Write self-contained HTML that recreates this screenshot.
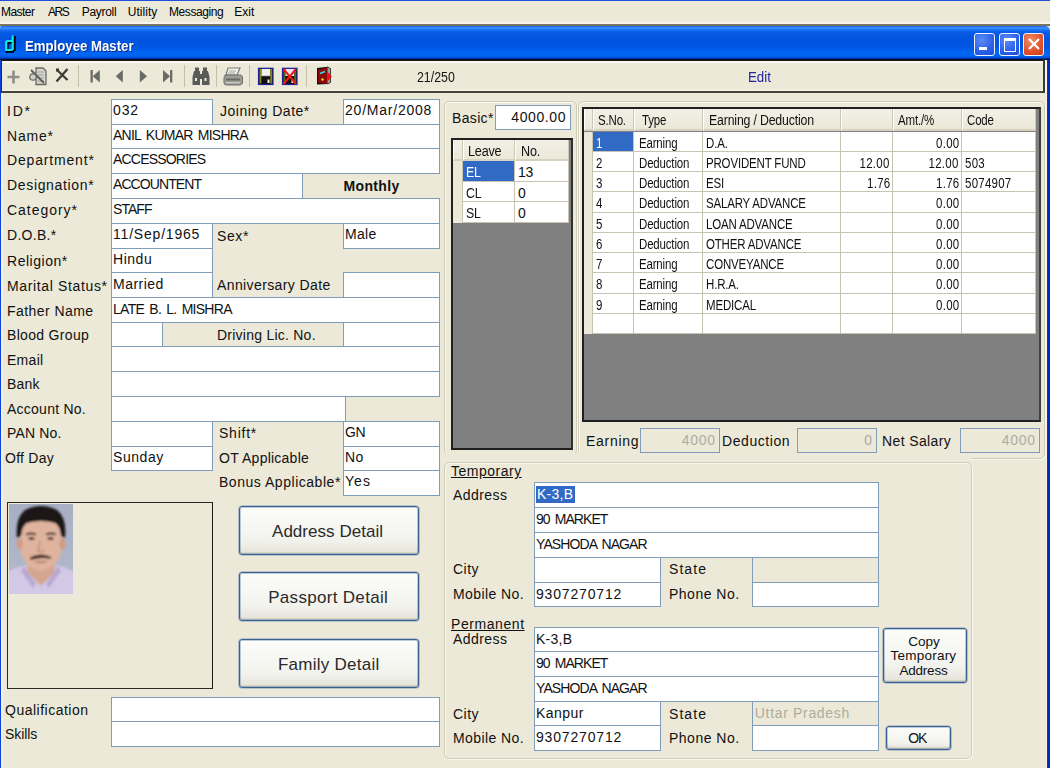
<!DOCTYPE html><html><head><meta charset="utf-8"><style>
html,body{margin:0;padding:0;}
body{width:1050px;height:768px;position:relative;overflow:hidden;background:#ECE9D8;font-family:"Liberation Sans", sans-serif;}
.t{position:absolute;white-space:nowrap;}
.b{position:absolute;box-sizing:content-box;}
</style></head><body>
<div class="b" style="left:0px;top:0px;width:1050px;height:1px;background:#1E4FD8;"></div>
<div class="b" style="left:0px;top:1px;width:1050px;height:21px;background:#ECE9D8;"></div>
<div class="b" style="left:0px;top:22px;width:1050px;height:2px;background:#F8F6EE;"></div>
<div class="b" style="left:0px;top:24px;width:1050px;height:2px;background:#7A7464;"></div>
<div class="t" style="left:1px;top:6.04px;font-size:12px;line-height:12px;letter-spacing:-0.56px;color:#000;">Master</div>
<div class="t" style="left:48px;top:6.04px;font-size:12px;line-height:12px;letter-spacing:-1.5px;color:#000;">ARS</div>
<div class="t" style="left:81.7px;top:6.04px;font-size:12px;line-height:12px;letter-spacing:-0.3px;color:#000;">Payroll</div>
<div class="t" style="left:127.7px;top:6.04px;font-size:12px;line-height:12px;letter-spacing:0.05px;color:#000;">Utility</div>
<div class="t" style="left:169px;top:6.04px;font-size:12px;line-height:12px;letter-spacing:-0.41px;color:#000;">Messaging</div>
<div class="t" style="left:234.3px;top:6.04px;font-size:12px;line-height:12px;letter-spacing:0.0px;color:#000;">Exit</div>
<div class="b" style="left:0;top:26px;width:1050px;height:34px;border-radius:2px 5px 0 0;background:linear-gradient(#1050D8 0px,#2A80F4 1px,#3A93FF 2px,#1870F4 4px,#0A5CE8 6px,#0054DE 13px,#0056E2 21px,#0066F6 27px,#0062F0 30px,#0048D8 32px,#001030 33.5px);"></div>
<div class="b" style="left:0px;top:60px;width:1px;height:708px;background:#0A44D8;"></div>
<div class="b" style="left:1px;top:60px;width:2px;height:708px;background:#F4F0E0;"></div>
<div class="b" style="left:1046px;top:60px;width:1px;height:708px;background:#FBF3DA;"></div>
<div class="b" style="left:1047px;top:60px;width:3px;height:708px;background:linear-gradient(90deg,#0038E8,#0020A0);"></div>
<svg class="b" style="left:4px;top:34px" width="13" height="19" viewBox="0 0 13 19"><path d="M9.5 1.5 V16.5 M2.5 7.5 H9.5 M2.5 7.5 V16.5 H9.5" stroke="#000" stroke-width="3.2" fill="none" transform="translate(0.6,0.6)"/><path d="M8.7 1.5 V16 M2.2 7 H8.7 M2.2 7 V16 H8.7" stroke="#10E8E8" stroke-width="2.2" fill="none"/></svg>
<div class="t" style="left:24.9px;top:37.68px;font-size:15.5px;line-height:15.5px;color:#fff;transform:scaleX(0.8516);transform-origin:0 0;font-weight:bold;text-shadow:1px 1px 0 #0A2A80;">Employee Master</div>
<div class="b" style="left:974px;top:33px;width:19px;height:21px;border:1.5px solid #F0F4FF;border-radius:3px;background:radial-gradient(circle at 35% 30%,#5C8CF8,#2A60E8 60%,#1A4CD8);"></div>
<div class="b" style="left:999px;top:33px;width:19px;height:21px;border:1.5px solid #F0F4FF;border-radius:3px;background:radial-gradient(circle at 35% 30%,#5C8CF8,#2A60E8 60%,#1A4CD8);"></div>
<div class="b" style="left:1023px;top:33px;width:19px;height:21px;border:1.5px solid #F0F4FF;border-radius:3px;background:radial-gradient(circle at 35% 30%,#F08C6A,#E0502A 60%,#C83C18);"></div>
<div class="b" style="left:979px;top:47px;width:8px;height:3px;background:#fff"></div>
<div class="b" style="left:1004px;top:38px;width:10px;height:10px;border:1.5px solid #fff;border-top-width:3px"></div>
<svg class="b" style="left:1027px;top:37px" width="14" height="14" viewBox="0 0 14 14"><path d="M2 2 L12 12 M12 2 L2 12" stroke="#fff" stroke-width="2.2"/></svg>
<div class="b" style="left:1px;top:60px;width:1045px;height:1px;background:#1A1810;"></div>
<div class="b" style="left:1px;top:61px;width:1045px;height:2px;background:#F8F6EE;"></div>
<div class="b" style="left:1px;top:63px;width:1045px;height:26px;background:#ECE9D8;"></div>
<div class="b" style="left:1px;top:89px;width:1045px;height:2px;background:#F4F0E0;"></div>
<div class="b" style="left:1px;top:91px;width:1045px;height:2px;background:#45443C;"></div>
<div class="b" style="left:1px;top:60px;width:1px;height:33px;background:#2A2A24;"></div>
<div class="b" style="left:1043px;top:60px;width:2px;height:33px;background:#3A3A34;"></div>
<div class="b" style="left:1045px;top:60px;width:1px;height:33px;background:#F8F6EE;"></div>
<div class="b" style="left:78px;top:65px;width:1px;height:22px;background:#C4C0AC;"></div>
<div class="b" style="left:184px;top:65px;width:1px;height:22px;background:#C4C0AC;"></div>
<div class="b" style="left:216px;top:65px;width:1px;height:22px;background:#C4C0AC;"></div>
<div class="b" style="left:249px;top:65px;width:1px;height:22px;background:#C4C0AC;"></div>
<div class="b" style="left:306px;top:65px;width:1px;height:22px;background:#C4C0AC;"></div>
<svg class="b" style="left:0;top:60px" width="340" height="33" viewBox="0 60 340 33">
<g fill="none" stroke="#8E8E86" stroke-width="2.6"><path d="M7.5 77 H19.5 M13.5 70.5 V83.5"/></g>
<g>
 <path d="M36 68 H43 L46 71 V84.5 H36 Z" fill="#D8D8D0" stroke="#6A6A64" stroke-width="1.3"/>
 <path d="M37.5 72 H44 M37.5 75 H44 M37.5 78 H44 M37.5 81 H44" stroke="#9A9A94" stroke-width="1"/>
 <path d="M31 70 L44 83" stroke="#5A5A56" stroke-width="1.8"/>
 <circle cx="33" cy="77" r="3.2" fill="#D0D0C8" stroke="#6A6A64" stroke-width="1.2"/>
</g>
<g stroke="#3C3C3A" stroke-width="2.3" fill="none"><path d="M56.5 69.5 L67.5 80 M67.5 69 L56.5 81.5"/></g>
<path d="M56 68.5 h3 v3 h-3z" fill="#3C3C3A"/>
<g fill="#6A6A66">
 <rect x="90.5" y="70" width="2.3" height="12.5"/><path d="M99.8 70 V82.5 L92.8 76.2 Z"/>
 <path d="M122.8 70 V82.5 L115.8 76.2 Z"/>
 <path d="M139.8 70 V82.5 L147 76.2 Z"/>
 <path d="M163 70 V82.5 L170 76.2 Z"/><rect x="170" y="70" width="2.3" height="12.5"/>
</g>
<g fill="#5A5A58">
 <rect x="195" y="67.5" width="4" height="4"/><rect x="203" y="67.5" width="4" height="4"/>
 <path d="M194 71 H200 V85 H192.5 V77 Z"/><path d="M202 71 H208 L209.5 77 V85 H202 Z"/>
 <rect x="199.5" y="74" width="3" height="5"/>
</g>
<g fill="#E8E8E0"><rect x="195" y="78" width="2" height="3"/><rect x="204.5" y="78" width="2" height="3"/></g>
<g>
 <path d="M228 68 H240 L237 75 H226 Z" fill="#F4F4F0" stroke="#7A7A76" stroke-width="1.2"/>
 <path d="M229 71 H236 M228 73 H235" stroke="#9A9A96" stroke-width="0.9"/>
 <path d="M225 75 H241 Q243 76 242.5 79 V83 Q242 85 239 85 H227 Q224 85 224 83 V79 Q224 76 225 75 Z" fill="#9C9C98" stroke="#6E6E6A" stroke-width="1"/>
 <rect x="226" y="78.5" width="14" height="2" fill="#6A6A66"/>
 <rect x="226" y="82" width="14" height="1.3" fill="#C8C8C4"/>
</g>
<g>
 <rect x="258.5" y="68.3" width="14.5" height="16.2" fill="#101010" stroke="#2020A0" stroke-width="1.2"/>
 <rect x="259.5" y="69" width="1.8" height="14.5" fill="#8A8A10"/><rect x="270.3" y="69" width="1.8" height="14.5" fill="#8A8A10"/>
 <rect x="261.5" y="69" width="8.6" height="7" fill="#F0F0EC"/>
 <rect x="261.5" y="75" width="8.6" height="1.2" fill="#C8C8F0"/>
 <rect x="267.5" y="79.5" width="2" height="3.5" fill="#F0F0F0"/>
</g>
<g>
 <rect x="282.5" y="68.3" width="14.5" height="16.2" fill="#101010" stroke="#2020A0" stroke-width="1.2"/>
 <rect x="283.5" y="69" width="1.8" height="14.5" fill="#5A6A10"/><rect x="294.3" y="69" width="1.8" height="14.5" fill="#5A6A10"/>
 <rect x="285.5" y="69" width="8.6" height="7" fill="#E8E8F4"/>
 <rect x="291.5" y="79.5" width="2" height="3.5" fill="#F0F0F0"/>
 <path d="M283.5 69 L296 84 M296 69 L283.5 84" stroke="#F01818" stroke-width="2"/>
</g>
<g>
 <path d="M317 68 L328 66.8 V84 L317 84.5 Z" fill="#101010"/>
 <path d="M318 69.5 L327.5 67.5 V84 L318 82.8 Z" fill="#8A0A0A"/>
 <path d="M320 73.5 L325 71.5" stroke="#30E0E8" stroke-width="1.8"/>
 <circle cx="322.5" cy="79.5" r="1.2" fill="#F0E020"/>
 <path d="M327.5 67 L330.5 68.5 V82.5 L327.5 84" fill="#A0A0A0" stroke="#202020" stroke-width="0.8"/>
 <path d="M331.8 76.5 L328.5 72.5 L326.8 76.5 L328.5 80.8 Z" fill="#F01010"/>
</g>
</svg>
<div class="t" style="left:417px;top:70.33px;font-size:14.5px;line-height:14.5px;color:#151515;transform:scaleX(0.8512);transform-origin:0 0;">21/250</div>
<div class="t" style="left:748px;top:70.33px;font-size:14.5px;line-height:14.5px;color:#2424A0;transform:scaleX(0.9167);transform-origin:0 0;">Edit</div>
<div class="t" style="left:7px;top:104.45px;font-size:14px;line-height:14px;letter-spacing:1.8px;color:#111;">ID*</div>
<div class="t" style="left:7px;top:129.45px;font-size:14px;line-height:14px;letter-spacing:0.8px;color:#111;">Name*</div>
<div class="t" style="left:7px;top:153.45px;font-size:14px;line-height:14px;letter-spacing:0.83px;color:#111;">Department*</div>
<div class="t" style="left:7px;top:178.45px;font-size:14px;line-height:14px;letter-spacing:0.66px;color:#111;">Designation*</div>
<div class="t" style="left:7px;top:203.45px;font-size:14px;line-height:14px;letter-spacing:0.96px;color:#111;">Category*</div>
<div class="t" style="left:7px;top:228.45px;font-size:14px;line-height:14px;letter-spacing:0.3px;color:#111;">D.O.B.*</div>
<div class="t" style="left:7px;top:253.95px;font-size:14px;line-height:14px;letter-spacing:0.53px;color:#111;">Religion*</div>
<div class="t" style="left:7px;top:278.95px;font-size:14px;line-height:14px;letter-spacing:0.64px;color:#111;">Marital Status*</div>
<div class="t" style="left:7px;top:303.95px;font-size:14px;line-height:14px;letter-spacing:0.44px;color:#111;">Father Name</div>
<div class="t" style="left:7px;top:328.45px;font-size:14px;line-height:14px;letter-spacing:0.32px;color:#111;">Blood Group</div>
<div class="t" style="left:7px;top:352.75px;font-size:14px;line-height:14px;letter-spacing:0.28px;color:#111;">Email</div>
<div class="t" style="left:7px;top:377.45px;font-size:14px;line-height:14px;letter-spacing:0.2px;color:#111;">Bank</div>
<div class="t" style="left:7px;top:402.45px;font-size:14px;line-height:14px;letter-spacing:0.25px;color:#111;">Account No.</div>
<div class="t" style="left:7px;top:426.45px;font-size:14px;line-height:14px;letter-spacing:0.17px;color:#111;">PAN No.</div>
<div class="t" style="left:5px;top:451.45px;font-size:14px;line-height:14px;letter-spacing:0.25px;color:#111;">Off Day</div>
<div class="b" style="left:111px;top:99px;width:100px;height:24px;background:#fff;border:1px solid #7F9DB9;"></div>
<div class="t" style="left:113px;top:103.05px;font-size:14px;line-height:14px;letter-spacing:0.9px;color:#111;">032</div>
<div class="b" style="left:343px;top:99px;width:95px;height:24px;background:#fff;border:1px solid #7F9DB9;"></div>
<div class="t" style="left:345px;top:103.05px;font-size:14px;line-height:14px;letter-spacing:0.78px;color:#111;">20/Mar/2008</div>
<div class="b" style="left:111px;top:124px;width:327px;height:23px;background:#fff;border:1px solid #7F9DB9;"></div>
<div class="t" style="left:113px;top:128.05px;font-size:14px;line-height:14px;letter-spacing:-0.74px;color:#111;word-spacing:2.0px;">ANIL KUMAR MISHRA</div>
<div class="b" style="left:111px;top:148px;width:327px;height:24px;background:#fff;border:1px solid #7F9DB9;"></div>
<div class="t" style="left:113px;top:152.05px;font-size:14px;line-height:14px;letter-spacing:-0.8px;color:#111;">ACCESSORIES</div>
<div class="b" style="left:111px;top:173px;width:190px;height:24px;background:#fff;border:1px solid #7F9DB9;"></div>
<div class="t" style="left:113px;top:177.05px;font-size:14px;line-height:14px;letter-spacing:-0.92px;color:#111;">ACCOUNTENT</div>
<div class="b" style="left:111px;top:198px;width:327px;height:24px;background:#fff;border:1px solid #7F9DB9;"></div>
<div class="t" style="left:113px;top:202.05px;font-size:14px;line-height:14px;letter-spacing:-0.95px;color:#111;">STAFF</div>
<div class="b" style="left:111px;top:223px;width:100px;height:24px;background:#fff;border:1px solid #7F9DB9;"></div>
<div class="t" style="left:113px;top:227.05px;font-size:14px;line-height:14px;letter-spacing:0.8px;color:#111;">11/Sep/1965</div>
<div class="b" style="left:343px;top:223px;width:95px;height:24px;background:#fff;border:1px solid #7F9DB9;"></div>
<div class="t" style="left:345px;top:227.05px;font-size:14px;line-height:14px;letter-spacing:0.33px;color:#111;">Male</div>
<div class="b" style="left:111px;top:248px;width:100px;height:23px;background:#fff;border:1px solid #7F9DB9;"></div>
<div class="t" style="left:113px;top:252.05px;font-size:14px;line-height:14px;letter-spacing:0.53px;color:#111;">Hindu</div>
<div class="b" style="left:111px;top:272px;width:100px;height:24px;background:#fff;border:1px solid #7F9DB9;"></div>
<div class="t" style="left:113px;top:277.05px;font-size:14px;line-height:14px;letter-spacing:0.47px;color:#111;">Married</div>
<div class="b" style="left:343px;top:272px;width:95px;height:24px;background:#fff;border:1px solid #7F9DB9;"></div>
<div class="b" style="left:111px;top:297px;width:327px;height:24px;background:#fff;border:1px solid #7F9DB9;"></div>
<div class="t" style="left:113px;top:302.15px;font-size:14px;line-height:14px;letter-spacing:-0.72px;color:#111;word-spacing:2.0px;">LATE B. L. MISHRA</div>
<div class="b" style="left:111px;top:322px;width:50px;height:23px;background:#fff;border:1px solid #7F9DB9;"></div>
<div class="b" style="left:343px;top:322px;width:95px;height:23px;background:#fff;border:1px solid #7F9DB9;"></div>
<div class="b" style="left:111px;top:346px;width:327px;height:24px;background:#fff;border:1px solid #7F9DB9;"></div>
<div class="b" style="left:111px;top:371px;width:327px;height:24px;background:#fff;border:1px solid #7F9DB9;"></div>
<div class="b" style="left:111px;top:396px;width:233px;height:24px;background:#fff;border:1px solid #7F9DB9;"></div>
<div class="b" style="left:111px;top:421px;width:100px;height:24px;background:#fff;border:1px solid #7F9DB9;"></div>
<div class="b" style="left:343px;top:421px;width:95px;height:24px;background:#fff;border:1px solid #7F9DB9;"></div>
<div class="t" style="left:345px;top:425.05px;font-size:14px;line-height:14px;letter-spacing:-0.4px;color:#111;">GN</div>
<div class="b" style="left:111px;top:446px;width:100px;height:23px;background:#fff;border:1px solid #7F9DB9;"></div>
<div class="t" style="left:113px;top:450.05px;font-size:14px;line-height:14px;letter-spacing:0.56px;color:#111;">Sunday</div>
<div class="b" style="left:343px;top:446px;width:95px;height:23px;background:#fff;border:1px solid #7F9DB9;"></div>
<div class="t" style="left:345px;top:450.05px;font-size:14px;line-height:14px;letter-spacing:0.4px;color:#111;">No</div>
<div class="b" style="left:343px;top:470px;width:95px;height:24px;background:#fff;border:1px solid #7F9DB9;"></div>
<div class="t" style="left:345px;top:474.05px;font-size:14px;line-height:14px;letter-spacing:1.05px;color:#111;">Yes</div>
<div class="t" style="left:220px;top:104.45px;font-size:14px;line-height:14px;letter-spacing:0.5px;color:#111;">Joining Date*</div>
<div class="t" style="left:343.6px;top:178.85px;font-size:14px;line-height:14px;letter-spacing:0.33px;color:#111;font-weight:bold;">Monthly</div>
<div class="t" style="left:217px;top:228.95px;font-size:14px;line-height:14px;letter-spacing:0.6px;color:#111;">Sex*</div>
<div class="t" style="left:217px;top:277.65px;font-size:14px;line-height:14px;letter-spacing:0.39px;color:#111;">Anniversary Date</div>
<div class="t" style="left:217px;top:327.65px;font-size:14px;line-height:14px;letter-spacing:0.24px;color:#111;">Driving Lic. No.</div>
<div class="t" style="left:219px;top:426.45px;font-size:14px;line-height:14px;letter-spacing:0.76px;color:#111;">Shift*</div>
<div class="t" style="left:219px;top:451.45px;font-size:14px;line-height:14px;letter-spacing:0.24px;color:#111;">OT Applicable</div>
<div class="t" style="left:219px;top:475.45px;font-size:14px;line-height:14px;letter-spacing:0.53px;color:#111;">Bonus Applicable*</div>
<div class="b" style="left:7px;top:502px;width:204px;height:185px;border:1.5px solid #2A2A24;border-right-color:#1A1A18;"></div>
<svg class="b" style="left:9px;top:504px" width="64" height="90" viewBox="0 0 64 90">
<defs><filter id="bl" x="-10%" y="-10%" width="120%" height="120%"><feGaussianBlur stdDeviation="0.9"/></filter>
<linearGradient id="bgg" x1="0" y1="0" x2="0" y2="1"><stop offset="0" stop-color="#A8AFC4"/><stop offset="1" stop-color="#B4BACB"/></linearGradient></defs>
<rect width="64" height="90" fill="url(#bgg)"/>
<g filter="url(#bl)">
<path d="M-2 68 Q8 63 17 61 L32 76 L47 61 Q56 63 66 68 V92 H-2 Z" fill="#D3C8E6"/>
<path d="M19 56 L45 56 L46 68 L32 82 L18 68 Z" fill="#D4A690"/>
<path d="M15 62 L27 80 L24 84 L12 67 Z" fill="#B9A8D2"/>
<path d="M49 62 L37 80 L40 84 L52 67 Z" fill="#B9A8D2"/>
<ellipse cx="32" cy="41.5" rx="21" ry="25" fill="#DFB39E"/>
<path d="M11.5 40 Q11 20 20 17 H44 Q53 20 52.5 40 Z" fill="#DFB39E"/>
<ellipse cx="10.5" cy="40" rx="3" ry="6" fill="#CF9C86"/>
<ellipse cx="53.5" cy="40" rx="3" ry="6" fill="#CF9C86"/>
<path d="M8 34 Q6 14 16 6 Q32 -2 48 6 Q58 14 56 34 L52 32 Q51 22 46 19 Q32 15 18 19 Q13 22 12 32 Z" fill="#1C1818"/>
<path d="M17 30.5 Q22 28.5 27 30.5 M37 30.5 Q42 28.5 47 30.5" stroke="#3A2622" stroke-width="1.8" fill="none"/>
<ellipse cx="22.5" cy="34.5" rx="3" ry="1.5" fill="#4A2E26"/>
<ellipse cx="41.5" cy="34.5" rx="3" ry="1.5" fill="#4A2E26"/>
<path d="M31 37 Q30 44 28.5 46.5 Q32 48.5 35.5 46.5" stroke="#B4806A" stroke-width="1.1" fill="none"/>
<path d="M22 54 Q32 48.5 42 54 Q32 52 22 55 Z" fill="#3A2220" stroke="#3A2220" stroke-width="1.6"/>
<path d="M26.5 57.5 Q32 59 37.5 57.5" stroke="#B07060" stroke-width="1.3" fill="none"/>
</g>
</svg>
<div class="b" style="left:239px;top:506px;width:178px;height:47px;border:1px solid #3A6290;border-radius:3px;background:linear-gradient(#FCFCFA,#F3F3EE 70%,#E4E2D8);box-shadow:inset 0 0 0 1px rgba(70,110,160,0.35), inset 0 -2px 0 #D8D4C4, 0 0 0 0.6px #8AA0C0;"></div>
<div class="t" style="left:272px;top:522.91px;font-size:17px;line-height:17px;letter-spacing:0.04px;color:#2A2A2A;">Address Detail</div>
<div class="b" style="left:239px;top:572px;width:178px;height:47px;border:1px solid #3A6290;border-radius:3px;background:linear-gradient(#FCFCFA,#F3F3EE 70%,#E4E2D8);box-shadow:inset 0 0 0 1px rgba(70,110,160,0.35), inset 0 -2px 0 #D8D4C4, 0 0 0 0.6px #8AA0C0;"></div>
<div class="t" style="left:268.2px;top:588.91px;font-size:17px;line-height:17px;letter-spacing:0.31px;color:#2A2A2A;">Passport Detail</div>
<div class="b" style="left:239px;top:639px;width:178px;height:47px;border:1px solid #3A6290;border-radius:3px;background:linear-gradient(#FCFCFA,#F3F3EE 70%,#E4E2D8);box-shadow:inset 0 0 0 1px rgba(70,110,160,0.35), inset 0 -2px 0 #D8D4C4, 0 0 0 0.6px #8AA0C0;"></div>
<div class="t" style="left:277.9px;top:655.91px;font-size:17px;line-height:17px;letter-spacing:0.27px;color:#2A2A2A;">Family Detail</div>
<div class="t" style="left:5px;top:703.15px;font-size:14px;line-height:14px;letter-spacing:0.5px;color:#111;">Qualification</div>
<div class="t" style="left:5px;top:727.15px;font-size:14px;line-height:14px;letter-spacing:-0.08px;color:#111;">Skills</div>
<div class="b" style="left:111px;top:697px;width:327px;height:24px;background:#fff;border:1px solid #7F9DB9;"></div>
<div class="b" style="left:111px;top:721px;width:327px;height:24px;background:#fff;border:1px solid #7F9DB9;"></div>
<div class="b" style="left:444px;top:101px;width:131px;height:352px;border:1px solid #D0CCB8;border-radius:5px;box-shadow:inset 1px 1px 0 #FAF8F0, 1px 1px 0 #FAF8F0;"></div>
<div class="t" style="left:452px;top:111.15px;font-size:14px;line-height:14px;letter-spacing:0.34px;color:#111;">Basic*</div>
<div class="b" style="left:495px;top:105px;width:74px;height:23px;background:#fff;border:1px solid #7F9DB9;"></div>
<div class="t" style="right:483.9px;top:110.05px;font-size:14px;line-height:14px;letter-spacing:0.6px;color:#111;">4000.00</div>
<div class="b" style="left:451px;top:138px;width:118px;height:308px;background:#808080;border:2px solid #202020;border-right-color:#303030;"></div>
<div class="b" style="left:453px;top:140px;width:8px;height:19px;background:linear-gradient(#F2F0E6,#EBE8D8);border-left:1px solid #FFFFFF;border-right:1px solid #CBC7B8;border-bottom:2px solid #D6D2C2;"></div>
<div class="b" style="left:463px;top:140px;width:50px;height:19px;background:linear-gradient(#F2F0E6,#EBE8D8);border-left:1px solid #FFFFFF;border-right:1px solid #CBC7B8;border-bottom:2px solid #D6D2C2;"></div>
<div class="t" style="left:468px;top:144.15px;font-size:14px;line-height:14px;letter-spacing:-0.2px;color:#111;transform:scaleX(0.9);transform-origin:0 0;">Leave</div>
<div class="b" style="left:515px;top:140px;width:52px;height:19px;background:linear-gradient(#F2F0E6,#EBE8D8);border-left:1px solid #FFFFFF;border-right:1px solid #CBC7B8;border-bottom:2px solid #D6D2C2;"></div>
<div class="t" style="left:521px;top:144.15px;font-size:14px;line-height:14px;letter-spacing:-0.2px;color:#111;transform:scaleX(0.9);transform-origin:0 0;">No.</div>
<div class="b" style="left:453px;top:161px;width:9px;height:21px;background:#ECE9D8;border-right:1px solid #C8C4B4;"></div>
<div class="b" style="left:463px;top:161px;width:51px;height:20px;background:#316AC5;border-right:1px solid #C8C4B4;border-bottom:1px solid #C8C4B4;"></div>
<div class="t" style="left:466px;top:165.15px;font-size:14px;line-height:14px;letter-spacing:-0.3px;color:#fff;transform:scaleX(0.88);transform-origin:0 0;">EL</div>
<div class="b" style="left:515px;top:161px;width:53px;height:20px;background:#fff;border-right:1px solid #C8C4B4;border-bottom:1px solid #C8C4B4;"></div>
<div class="t" style="left:518px;top:165.15px;font-size:14px;line-height:14px;letter-spacing:-0.3px;color:#111;transform:scaleX(1.0);transform-origin:0 0;">13</div>
<div class="b" style="left:453px;top:182px;width:9px;height:20px;background:#ECE9D8;border-right:1px solid #C8C4B4;"></div>
<div class="b" style="left:463px;top:182px;width:51px;height:19px;background:#fff;border-right:1px solid #C8C4B4;border-bottom:1px solid #C8C4B4;"></div>
<div class="t" style="left:466px;top:186.15px;font-size:14px;line-height:14px;letter-spacing:-0.3px;color:#111;transform:scaleX(0.88);transform-origin:0 0;">CL</div>
<div class="b" style="left:515px;top:182px;width:53px;height:19px;background:#fff;border-right:1px solid #C8C4B4;border-bottom:1px solid #C8C4B4;"></div>
<div class="t" style="left:518px;top:186.15px;font-size:14px;line-height:14px;letter-spacing:-0.3px;color:#111;transform:scaleX(1.0);transform-origin:0 0;">0</div>
<div class="b" style="left:453px;top:202px;width:9px;height:21px;background:#ECE9D8;border-right:1px solid #C8C4B4;"></div>
<div class="b" style="left:463px;top:202px;width:51px;height:20px;background:#fff;border-right:1px solid #C8C4B4;border-bottom:1px solid #C8C4B4;"></div>
<div class="t" style="left:466px;top:206.15px;font-size:14px;line-height:14px;letter-spacing:-0.3px;color:#111;transform:scaleX(0.88);transform-origin:0 0;">SL</div>
<div class="b" style="left:515px;top:202px;width:53px;height:20px;background:#fff;border-right:1px solid #C8C4B4;border-bottom:1px solid #C8C4B4;"></div>
<div class="t" style="left:518px;top:206.15px;font-size:14px;line-height:14px;letter-spacing:-0.3px;color:#111;transform:scaleX(1.0);transform-origin:0 0;">0</div>
<div class="b" style="left:578px;top:101px;width:465px;height:356px;border:1px solid #D0CCB8;border-radius:5px;box-shadow:inset 1px 1px 0 #FAF8F0, 1px 1px 0 #FAF8F0;"></div>
<div class="b" style="left:582px;top:107px;width:455px;height:311px;background:#808080;border:2px solid #202020;border-right-color:#404040;"></div>
<div class="b" style="left:584px;top:109px;width:7px;height:20px;background:linear-gradient(#F2F0E6,#EBE8D8);border-left:1px solid #FFFFFF;border-right:1px solid #CBC7B8;border-bottom:2px solid #D6D2C2;"></div>
<div class="b" style="left:593px;top:109px;width:39px;height:20px;background:linear-gradient(#F2F0E6,#EBE8D8);border-left:1px solid #FFFFFF;border-right:1px solid #CBC7B8;border-bottom:2px solid #D6D2C2;"></div>
<div class="t" style="left:598px;top:113.15px;font-size:14px;line-height:14px;letter-spacing:-0.2px;color:#111;transform:scaleX(0.82);transform-origin:0 0;">S.No.</div>
<div class="b" style="left:634px;top:109px;width:67px;height:20px;background:linear-gradient(#F2F0E6,#EBE8D8);border-left:1px solid #FFFFFF;border-right:1px solid #CBC7B8;border-bottom:2px solid #D6D2C2;"></div>
<div class="t" style="left:642px;top:113.15px;font-size:14px;line-height:14px;letter-spacing:-0.2px;color:#111;transform:scaleX(0.82);transform-origin:0 0;">Type</div>
<div class="b" style="left:703px;top:109px;width:136px;height:20px;background:linear-gradient(#F2F0E6,#EBE8D8);border-left:1px solid #FFFFFF;border-right:1px solid #CBC7B8;border-bottom:2px solid #D6D2C2;"></div>
<div class="t" style="left:709px;top:113.15px;font-size:14px;line-height:14px;letter-spacing:-0.2px;color:#111;transform:scaleX(0.88);transform-origin:0 0;">Earning / Deduction</div>
<div class="b" style="left:841px;top:109px;width:50px;height:20px;background:linear-gradient(#F2F0E6,#EBE8D8);border-left:1px solid #FFFFFF;border-right:1px solid #CBC7B8;border-bottom:2px solid #D6D2C2;"></div>
<div class="b" style="left:893px;top:109px;width:67px;height:20px;background:linear-gradient(#F2F0E6,#EBE8D8);border-left:1px solid #FFFFFF;border-right:1px solid #CBC7B8;border-bottom:2px solid #D6D2C2;"></div>
<div class="t" style="left:898px;top:113.15px;font-size:14px;line-height:14px;letter-spacing:-0.2px;color:#111;transform:scaleX(0.82);transform-origin:0 0;">Amt./%</div>
<div class="b" style="left:962px;top:109px;width:72px;height:20px;background:linear-gradient(#F2F0E6,#EBE8D8);border-left:1px solid #FFFFFF;border-right:1px solid #CBC7B8;border-bottom:2px solid #D6D2C2;"></div>
<div class="t" style="left:967px;top:113.15px;font-size:14px;line-height:14px;letter-spacing:-0.2px;color:#111;transform:scaleX(0.82);transform-origin:0 0;">Code</div>
<div class="b" style="left:584px;top:132px;width:8px;height:20px;background:#ECE9D8;border-right:1px solid #C8C4B4;"></div>
<div class="b" style="left:593px;top:132px;width:40px;height:19px;background:#316AC5;border-right:1px solid #C8C4B4;border-bottom:1px solid #C8C4B4;"></div>
<div class="t" style="left:596px;top:135.65px;font-size:14px;line-height:14px;letter-spacing:-0.2px;color:#fff;transform:scaleX(0.82);transform-origin:0 0;">1</div>
<div class="b" style="left:634px;top:132px;width:68px;height:19px;background:#fff;border-right:1px solid #C8C4B4;border-bottom:1px solid #C8C4B4;"></div>
<div class="t" style="left:638.5px;top:135.65px;font-size:14px;line-height:14px;letter-spacing:-0.2px;color:#111;transform:scaleX(0.82);transform-origin:0 0;">Earning</div>
<div class="b" style="left:703px;top:132px;width:137px;height:19px;background:#fff;border-right:1px solid #C8C4B4;border-bottom:1px solid #C8C4B4;"></div>
<div class="t" style="left:706px;top:135.65px;font-size:14px;line-height:14px;letter-spacing:-0.2px;color:#111;transform:scaleX(0.82);transform-origin:0 0;">D.A.</div>
<div class="b" style="left:841px;top:132px;width:51px;height:19px;background:#fff;border-right:1px solid #C8C4B4;border-bottom:1px solid #C8C4B4;"></div>
<div class="b" style="left:893px;top:132px;width:68px;height:19px;background:#fff;border-right:1px solid #C8C4B4;border-bottom:1px solid #C8C4B4;"></div>
<div class="t" style="right:91px;top:135.65px;font-size:14px;line-height:14px;letter-spacing:0.3px;color:#111;transform:scaleX(0.82);transform-origin:100% 0;">0.00</div>
<div class="b" style="left:962px;top:132px;width:73px;height:19px;background:#fff;border-right:1px solid #C8C4B4;border-bottom:1px solid #C8C4B4;"></div>
<div class="b" style="left:584px;top:152px;width:8px;height:20px;background:#ECE9D8;border-right:1px solid #C8C4B4;"></div>
<div class="b" style="left:593px;top:152px;width:40px;height:19px;background:#fff;border-right:1px solid #C8C4B4;border-bottom:1px solid #C8C4B4;"></div>
<div class="t" style="left:596px;top:155.65px;font-size:14px;line-height:14px;letter-spacing:-0.2px;color:#111;transform:scaleX(0.82);transform-origin:0 0;">2</div>
<div class="b" style="left:634px;top:152px;width:68px;height:19px;background:#fff;border-right:1px solid #C8C4B4;border-bottom:1px solid #C8C4B4;"></div>
<div class="t" style="left:638.5px;top:155.65px;font-size:14px;line-height:14px;letter-spacing:-0.2px;color:#111;transform:scaleX(0.82);transform-origin:0 0;">Deduction</div>
<div class="b" style="left:703px;top:152px;width:137px;height:19px;background:#fff;border-right:1px solid #C8C4B4;border-bottom:1px solid #C8C4B4;"></div>
<div class="t" style="left:706px;top:155.65px;font-size:14px;line-height:14px;letter-spacing:-0.2px;color:#111;transform:scaleX(0.82);transform-origin:0 0;">PROVIDENT FUND</div>
<div class="b" style="left:841px;top:152px;width:51px;height:19px;background:#fff;border-right:1px solid #C8C4B4;border-bottom:1px solid #C8C4B4;"></div>
<div class="t" style="right:160px;top:155.65px;font-size:14px;line-height:14px;letter-spacing:0.3px;color:#111;transform:scaleX(0.82);transform-origin:100% 0;">12.00</div>
<div class="b" style="left:893px;top:152px;width:68px;height:19px;background:#fff;border-right:1px solid #C8C4B4;border-bottom:1px solid #C8C4B4;"></div>
<div class="t" style="right:91px;top:155.65px;font-size:14px;line-height:14px;letter-spacing:0.3px;color:#111;transform:scaleX(0.82);transform-origin:100% 0;">12.00</div>
<div class="b" style="left:962px;top:152px;width:73px;height:19px;background:#fff;border-right:1px solid #C8C4B4;border-bottom:1px solid #C8C4B4;"></div>
<div class="t" style="left:965px;top:155.65px;font-size:14px;line-height:14px;letter-spacing:0.3px;color:#111;transform:scaleX(0.82);transform-origin:0 0;">503</div>
<div class="b" style="left:584px;top:172px;width:8px;height:20px;background:#ECE9D8;border-right:1px solid #C8C4B4;"></div>
<div class="b" style="left:593px;top:172px;width:40px;height:19px;background:#fff;border-right:1px solid #C8C4B4;border-bottom:1px solid #C8C4B4;"></div>
<div class="t" style="left:596px;top:175.65px;font-size:14px;line-height:14px;letter-spacing:-0.2px;color:#111;transform:scaleX(0.82);transform-origin:0 0;">3</div>
<div class="b" style="left:634px;top:172px;width:68px;height:19px;background:#fff;border-right:1px solid #C8C4B4;border-bottom:1px solid #C8C4B4;"></div>
<div class="t" style="left:638.5px;top:175.65px;font-size:14px;line-height:14px;letter-spacing:-0.2px;color:#111;transform:scaleX(0.82);transform-origin:0 0;">Deduction</div>
<div class="b" style="left:703px;top:172px;width:137px;height:19px;background:#fff;border-right:1px solid #C8C4B4;border-bottom:1px solid #C8C4B4;"></div>
<div class="t" style="left:706px;top:175.65px;font-size:14px;line-height:14px;letter-spacing:-0.2px;color:#111;transform:scaleX(0.82);transform-origin:0 0;">ESI</div>
<div class="b" style="left:841px;top:172px;width:51px;height:19px;background:#fff;border-right:1px solid #C8C4B4;border-bottom:1px solid #C8C4B4;"></div>
<div class="t" style="right:160px;top:175.65px;font-size:14px;line-height:14px;letter-spacing:0.3px;color:#111;transform:scaleX(0.82);transform-origin:100% 0;">1.76</div>
<div class="b" style="left:893px;top:172px;width:68px;height:19px;background:#fff;border-right:1px solid #C8C4B4;border-bottom:1px solid #C8C4B4;"></div>
<div class="t" style="right:91px;top:175.65px;font-size:14px;line-height:14px;letter-spacing:0.3px;color:#111;transform:scaleX(0.82);transform-origin:100% 0;">1.76</div>
<div class="b" style="left:962px;top:172px;width:73px;height:19px;background:#fff;border-right:1px solid #C8C4B4;border-bottom:1px solid #C8C4B4;"></div>
<div class="t" style="left:965px;top:175.65px;font-size:14px;line-height:14px;letter-spacing:0.3px;color:#111;transform:scaleX(0.82);transform-origin:0 0;">5074907</div>
<div class="b" style="left:584px;top:192px;width:8px;height:21px;background:#ECE9D8;border-right:1px solid #C8C4B4;"></div>
<div class="b" style="left:593px;top:192px;width:40px;height:20px;background:#fff;border-right:1px solid #C8C4B4;border-bottom:1px solid #C8C4B4;"></div>
<div class="t" style="left:596px;top:195.65px;font-size:14px;line-height:14px;letter-spacing:-0.2px;color:#111;transform:scaleX(0.82);transform-origin:0 0;">4</div>
<div class="b" style="left:634px;top:192px;width:68px;height:20px;background:#fff;border-right:1px solid #C8C4B4;border-bottom:1px solid #C8C4B4;"></div>
<div class="t" style="left:638.5px;top:195.65px;font-size:14px;line-height:14px;letter-spacing:-0.2px;color:#111;transform:scaleX(0.82);transform-origin:0 0;">Deduction</div>
<div class="b" style="left:703px;top:192px;width:137px;height:20px;background:#fff;border-right:1px solid #C8C4B4;border-bottom:1px solid #C8C4B4;"></div>
<div class="t" style="left:706px;top:195.65px;font-size:14px;line-height:14px;letter-spacing:-0.2px;color:#111;transform:scaleX(0.82);transform-origin:0 0;">SALARY ADVANCE</div>
<div class="b" style="left:841px;top:192px;width:51px;height:20px;background:#fff;border-right:1px solid #C8C4B4;border-bottom:1px solid #C8C4B4;"></div>
<div class="b" style="left:893px;top:192px;width:68px;height:20px;background:#fff;border-right:1px solid #C8C4B4;border-bottom:1px solid #C8C4B4;"></div>
<div class="t" style="right:91px;top:195.65px;font-size:14px;line-height:14px;letter-spacing:0.3px;color:#111;transform:scaleX(0.82);transform-origin:100% 0;">0.00</div>
<div class="b" style="left:962px;top:192px;width:73px;height:20px;background:#fff;border-right:1px solid #C8C4B4;border-bottom:1px solid #C8C4B4;"></div>
<div class="b" style="left:584px;top:213px;width:8px;height:20px;background:#ECE9D8;border-right:1px solid #C8C4B4;"></div>
<div class="b" style="left:593px;top:213px;width:40px;height:19px;background:#fff;border-right:1px solid #C8C4B4;border-bottom:1px solid #C8C4B4;"></div>
<div class="t" style="left:596px;top:216.65px;font-size:14px;line-height:14px;letter-spacing:-0.2px;color:#111;transform:scaleX(0.82);transform-origin:0 0;">5</div>
<div class="b" style="left:634px;top:213px;width:68px;height:19px;background:#fff;border-right:1px solid #C8C4B4;border-bottom:1px solid #C8C4B4;"></div>
<div class="t" style="left:638.5px;top:216.65px;font-size:14px;line-height:14px;letter-spacing:-0.2px;color:#111;transform:scaleX(0.82);transform-origin:0 0;">Deduction</div>
<div class="b" style="left:703px;top:213px;width:137px;height:19px;background:#fff;border-right:1px solid #C8C4B4;border-bottom:1px solid #C8C4B4;"></div>
<div class="t" style="left:706px;top:216.65px;font-size:14px;line-height:14px;letter-spacing:-0.2px;color:#111;transform:scaleX(0.82);transform-origin:0 0;">LOAN ADVANCE</div>
<div class="b" style="left:841px;top:213px;width:51px;height:19px;background:#fff;border-right:1px solid #C8C4B4;border-bottom:1px solid #C8C4B4;"></div>
<div class="b" style="left:893px;top:213px;width:68px;height:19px;background:#fff;border-right:1px solid #C8C4B4;border-bottom:1px solid #C8C4B4;"></div>
<div class="t" style="right:91px;top:216.65px;font-size:14px;line-height:14px;letter-spacing:0.3px;color:#111;transform:scaleX(0.82);transform-origin:100% 0;">0.00</div>
<div class="b" style="left:962px;top:213px;width:73px;height:19px;background:#fff;border-right:1px solid #C8C4B4;border-bottom:1px solid #C8C4B4;"></div>
<div class="b" style="left:584px;top:233px;width:8px;height:20px;background:#ECE9D8;border-right:1px solid #C8C4B4;"></div>
<div class="b" style="left:593px;top:233px;width:40px;height:19px;background:#fff;border-right:1px solid #C8C4B4;border-bottom:1px solid #C8C4B4;"></div>
<div class="t" style="left:596px;top:236.65px;font-size:14px;line-height:14px;letter-spacing:-0.2px;color:#111;transform:scaleX(0.82);transform-origin:0 0;">6</div>
<div class="b" style="left:634px;top:233px;width:68px;height:19px;background:#fff;border-right:1px solid #C8C4B4;border-bottom:1px solid #C8C4B4;"></div>
<div class="t" style="left:638.5px;top:236.65px;font-size:14px;line-height:14px;letter-spacing:-0.2px;color:#111;transform:scaleX(0.82);transform-origin:0 0;">Deduction</div>
<div class="b" style="left:703px;top:233px;width:137px;height:19px;background:#fff;border-right:1px solid #C8C4B4;border-bottom:1px solid #C8C4B4;"></div>
<div class="t" style="left:706px;top:236.65px;font-size:14px;line-height:14px;letter-spacing:-0.2px;color:#111;transform:scaleX(0.82);transform-origin:0 0;">OTHER ADVANCE</div>
<div class="b" style="left:841px;top:233px;width:51px;height:19px;background:#fff;border-right:1px solid #C8C4B4;border-bottom:1px solid #C8C4B4;"></div>
<div class="b" style="left:893px;top:233px;width:68px;height:19px;background:#fff;border-right:1px solid #C8C4B4;border-bottom:1px solid #C8C4B4;"></div>
<div class="t" style="right:91px;top:236.65px;font-size:14px;line-height:14px;letter-spacing:0.3px;color:#111;transform:scaleX(0.82);transform-origin:100% 0;">0.00</div>
<div class="b" style="left:962px;top:233px;width:73px;height:19px;background:#fff;border-right:1px solid #C8C4B4;border-bottom:1px solid #C8C4B4;"></div>
<div class="b" style="left:584px;top:253px;width:8px;height:20px;background:#ECE9D8;border-right:1px solid #C8C4B4;"></div>
<div class="b" style="left:593px;top:253px;width:40px;height:19px;background:#fff;border-right:1px solid #C8C4B4;border-bottom:1px solid #C8C4B4;"></div>
<div class="t" style="left:596px;top:256.65px;font-size:14px;line-height:14px;letter-spacing:-0.2px;color:#111;transform:scaleX(0.82);transform-origin:0 0;">7</div>
<div class="b" style="left:634px;top:253px;width:68px;height:19px;background:#fff;border-right:1px solid #C8C4B4;border-bottom:1px solid #C8C4B4;"></div>
<div class="t" style="left:638.5px;top:256.65px;font-size:14px;line-height:14px;letter-spacing:-0.2px;color:#111;transform:scaleX(0.82);transform-origin:0 0;">Earning</div>
<div class="b" style="left:703px;top:253px;width:137px;height:19px;background:#fff;border-right:1px solid #C8C4B4;border-bottom:1px solid #C8C4B4;"></div>
<div class="t" style="left:706px;top:256.65px;font-size:14px;line-height:14px;letter-spacing:-0.2px;color:#111;transform:scaleX(0.82);transform-origin:0 0;">CONVEYANCE</div>
<div class="b" style="left:841px;top:253px;width:51px;height:19px;background:#fff;border-right:1px solid #C8C4B4;border-bottom:1px solid #C8C4B4;"></div>
<div class="b" style="left:893px;top:253px;width:68px;height:19px;background:#fff;border-right:1px solid #C8C4B4;border-bottom:1px solid #C8C4B4;"></div>
<div class="t" style="right:91px;top:256.65px;font-size:14px;line-height:14px;letter-spacing:0.3px;color:#111;transform:scaleX(0.82);transform-origin:100% 0;">0.00</div>
<div class="b" style="left:962px;top:253px;width:73px;height:19px;background:#fff;border-right:1px solid #C8C4B4;border-bottom:1px solid #C8C4B4;"></div>
<div class="b" style="left:584px;top:273px;width:8px;height:21px;background:#ECE9D8;border-right:1px solid #C8C4B4;"></div>
<div class="b" style="left:593px;top:273px;width:40px;height:20px;background:#fff;border-right:1px solid #C8C4B4;border-bottom:1px solid #C8C4B4;"></div>
<div class="t" style="left:596px;top:276.65px;font-size:14px;line-height:14px;letter-spacing:-0.2px;color:#111;transform:scaleX(0.82);transform-origin:0 0;">8</div>
<div class="b" style="left:634px;top:273px;width:68px;height:20px;background:#fff;border-right:1px solid #C8C4B4;border-bottom:1px solid #C8C4B4;"></div>
<div class="t" style="left:638.5px;top:276.65px;font-size:14px;line-height:14px;letter-spacing:-0.2px;color:#111;transform:scaleX(0.82);transform-origin:0 0;">Earning</div>
<div class="b" style="left:703px;top:273px;width:137px;height:20px;background:#fff;border-right:1px solid #C8C4B4;border-bottom:1px solid #C8C4B4;"></div>
<div class="t" style="left:706px;top:276.65px;font-size:14px;line-height:14px;letter-spacing:-0.2px;color:#111;transform:scaleX(0.82);transform-origin:0 0;">H.R.A.</div>
<div class="b" style="left:841px;top:273px;width:51px;height:20px;background:#fff;border-right:1px solid #C8C4B4;border-bottom:1px solid #C8C4B4;"></div>
<div class="b" style="left:893px;top:273px;width:68px;height:20px;background:#fff;border-right:1px solid #C8C4B4;border-bottom:1px solid #C8C4B4;"></div>
<div class="t" style="right:91px;top:276.65px;font-size:14px;line-height:14px;letter-spacing:0.3px;color:#111;transform:scaleX(0.82);transform-origin:100% 0;">0.00</div>
<div class="b" style="left:962px;top:273px;width:73px;height:20px;background:#fff;border-right:1px solid #C8C4B4;border-bottom:1px solid #C8C4B4;"></div>
<div class="b" style="left:584px;top:294px;width:8px;height:20px;background:#ECE9D8;border-right:1px solid #C8C4B4;"></div>
<div class="b" style="left:593px;top:294px;width:40px;height:19px;background:#fff;border-right:1px solid #C8C4B4;border-bottom:1px solid #C8C4B4;"></div>
<div class="t" style="left:596px;top:297.65px;font-size:14px;line-height:14px;letter-spacing:-0.2px;color:#111;transform:scaleX(0.82);transform-origin:0 0;">9</div>
<div class="b" style="left:634px;top:294px;width:68px;height:19px;background:#fff;border-right:1px solid #C8C4B4;border-bottom:1px solid #C8C4B4;"></div>
<div class="t" style="left:638.5px;top:297.65px;font-size:14px;line-height:14px;letter-spacing:-0.2px;color:#111;transform:scaleX(0.82);transform-origin:0 0;">Earning</div>
<div class="b" style="left:703px;top:294px;width:137px;height:19px;background:#fff;border-right:1px solid #C8C4B4;border-bottom:1px solid #C8C4B4;"></div>
<div class="t" style="left:706px;top:297.65px;font-size:14px;line-height:14px;letter-spacing:-0.2px;color:#111;transform:scaleX(0.82);transform-origin:0 0;">MEDICAL</div>
<div class="b" style="left:841px;top:294px;width:51px;height:19px;background:#fff;border-right:1px solid #C8C4B4;border-bottom:1px solid #C8C4B4;"></div>
<div class="b" style="left:893px;top:294px;width:68px;height:19px;background:#fff;border-right:1px solid #C8C4B4;border-bottom:1px solid #C8C4B4;"></div>
<div class="t" style="right:91px;top:297.65px;font-size:14px;line-height:14px;letter-spacing:0.3px;color:#111;transform:scaleX(0.82);transform-origin:100% 0;">0.00</div>
<div class="b" style="left:962px;top:294px;width:73px;height:19px;background:#fff;border-right:1px solid #C8C4B4;border-bottom:1px solid #C8C4B4;"></div>
<div class="b" style="left:584px;top:314px;width:8px;height:20px;background:#ECE9D8;border-right:1px solid #C8C4B4;"></div>
<div class="b" style="left:593px;top:314px;width:40px;height:19px;background:#fff;border-right:1px solid #C8C4B4;border-bottom:1px solid #C8C4B4;"></div>
<div class="b" style="left:634px;top:314px;width:68px;height:19px;background:#fff;border-right:1px solid #C8C4B4;border-bottom:1px solid #C8C4B4;"></div>
<div class="b" style="left:703px;top:314px;width:137px;height:19px;background:#fff;border-right:1px solid #C8C4B4;border-bottom:1px solid #C8C4B4;"></div>
<div class="b" style="left:841px;top:314px;width:51px;height:19px;background:#fff;border-right:1px solid #C8C4B4;border-bottom:1px solid #C8C4B4;"></div>
<div class="b" style="left:893px;top:314px;width:68px;height:19px;background:#fff;border-right:1px solid #C8C4B4;border-bottom:1px solid #C8C4B4;"></div>
<div class="b" style="left:962px;top:314px;width:73px;height:19px;background:#fff;border-right:1px solid #C8C4B4;border-bottom:1px solid #C8C4B4;"></div>
<div class="t" style="left:586px;top:434.15px;font-size:14px;line-height:14px;letter-spacing:0.72px;color:#111;">Earning</div>
<div class="b" style="left:640px;top:428px;width:78px;height:23px;background:#ECE9D8;border:1px solid #7F9DB9;"></div>
<div class="t" style="right:334.33000000000004px;top:432.65px;font-size:14px;line-height:14px;letter-spacing:0.67px;color:#ACACA4;">4000</div>
<div class="t" style="left:722px;top:434.15px;font-size:14px;line-height:14px;letter-spacing:0.57px;color:#111;">Deduction</div>
<div class="b" style="left:797px;top:428px;width:78px;height:23px;background:#ECE9D8;border:1px solid #7F9DB9;"></div>
<div class="t" style="right:178px;top:432.65px;font-size:14px;line-height:14px;letter-spacing:0px;color:#ACACA4;">0</div>
<div class="t" style="left:882px;top:434.15px;font-size:14px;line-height:14px;letter-spacing:0.38px;color:#111;">Net Salary</div>
<div class="b" style="left:960px;top:428px;width:78px;height:23px;background:#ECE9D8;border:1px solid #7F9DB9;"></div>
<div class="t" style="right:14.329999999999927px;top:432.65px;font-size:14px;line-height:14px;letter-spacing:0.67px;color:#ACACA4;">4000</div>
<div class="b" style="left:446px;top:453px;width:526px;height:9px;background:#ECE9D8;"></div>
<div class="b" style="left:444px;top:462px;width:526px;height:295px;border:1px solid #D0CCB8;border-radius:5px;box-shadow:inset 1px 1px 0 #FAF8F0, 1px 1px 0 #FAF8F0;"></div>
<div class="t" style="left:451px;top:464.15px;font-size:14px;line-height:14px;letter-spacing:0.5px;color:#111;"><u>Temporary</u></div>
<div class="t" style="left:453px;top:488.15px;font-size:14px;line-height:14px;letter-spacing:0.43px;color:#111;">Address</div>
<div class="b" style="left:534px;top:482px;width:343px;height:24px;background:#fff;border:1px solid #7F9DB9;"></div>
<div class="b" style="left:536px;top:486px;width:39px;height:17px;background:#316AC5"></div>
<div class="t" style="left:537px;top:487.15px;font-size:14px;line-height:14px;letter-spacing:0.25px;color:#fff;">K-3,B</div>
<div class="b" style="left:534px;top:507px;width:343px;height:24px;background:#fff;border:1px solid #7F9DB9;"></div>
<div class="t" style="left:536px;top:512.15px;font-size:14px;line-height:14px;letter-spacing:-0.93px;color:#111;word-spacing:2.0px;">90 MARKET</div>
<div class="b" style="left:534px;top:532px;width:343px;height:24px;background:#fff;border:1px solid #7F9DB9;"></div>
<div class="t" style="left:536px;top:537.15px;font-size:14px;line-height:14px;letter-spacing:-0.89px;color:#111;word-spacing:2.0px;">YASHODA NAGAR</div>
<div class="b" style="left:534px;top:557px;width:125px;height:24px;background:#fff;border:1px solid #7F9DB9;"></div>
<div class="b" style="left:534px;top:582px;width:125px;height:23px;background:#fff;border:1px solid #7F9DB9;"></div>
<div class="t" style="left:536px;top:587.15px;font-size:14px;line-height:14px;letter-spacing:0.83px;color:#111;">9307270712</div>
<div class="t" style="left:453px;top:562.15px;font-size:14px;line-height:14px;letter-spacing:0.47px;color:#111;">City</div>
<div class="t" style="left:453px;top:586.65px;font-size:14px;line-height:14px;letter-spacing:0.4px;color:#111;">Mobile No.</div>
<div class="t" style="left:669px;top:562.15px;font-size:14px;line-height:14px;letter-spacing:1.07px;color:#111;">State</div>
<div class="t" style="left:669px;top:586.65px;font-size:14px;line-height:14px;letter-spacing:0.5px;color:#111;">Phone No.</div>
<div class="b" style="left:752px;top:557px;width:125px;height:24px;background:#ECE9D8;border:1px solid #7F9DB9;"></div>
<div class="b" style="left:752px;top:582px;width:125px;height:23px;background:#fff;border:1px solid #7F9DB9;"></div>
<div class="t" style="left:451px;top:617.15px;font-size:14px;line-height:14px;letter-spacing:0.57px;color:#111;"><u>Permanent</u></div>
<div class="t" style="left:453px;top:632.15px;font-size:14px;line-height:14px;letter-spacing:0.43px;color:#111;">Address</div>
<div class="b" style="left:534px;top:627px;width:343px;height:23px;background:#fff;border:1px solid #7F9DB9;"></div>
<div class="t" style="left:536px;top:632.15px;font-size:14px;line-height:14px;letter-spacing:0.25px;color:#111;">K-3,B</div>
<div class="b" style="left:534px;top:651px;width:343px;height:24px;background:#fff;border:1px solid #7F9DB9;"></div>
<div class="t" style="left:536px;top:656.15px;font-size:14px;line-height:14px;letter-spacing:-0.93px;color:#111;word-spacing:2.0px;">90 MARKET</div>
<div class="b" style="left:534px;top:676px;width:343px;height:24px;background:#fff;border:1px solid #7F9DB9;"></div>
<div class="t" style="left:536px;top:681.15px;font-size:14px;line-height:14px;letter-spacing:-0.89px;color:#111;word-spacing:2.0px;">YASHODA NAGAR</div>
<div class="b" style="left:534px;top:701px;width:125px;height:23px;background:#fff;border:1px solid #7F9DB9;"></div>
<div class="t" style="left:536px;top:706.15px;font-size:14px;line-height:14px;letter-spacing:0.44px;color:#111;">Kanpur</div>
<div class="b" style="left:534px;top:725px;width:125px;height:24px;background:#fff;border:1px solid #7F9DB9;"></div>
<div class="t" style="left:536px;top:730.15px;font-size:14px;line-height:14px;letter-spacing:0.83px;color:#111;">9307270712</div>
<div class="t" style="left:453px;top:706.65px;font-size:14px;line-height:14px;letter-spacing:0.47px;color:#111;">City</div>
<div class="t" style="left:453px;top:731.15px;font-size:14px;line-height:14px;letter-spacing:0.4px;color:#111;">Mobile No.</div>
<div class="t" style="left:669px;top:706.65px;font-size:14px;line-height:14px;letter-spacing:1.07px;color:#111;">State</div>
<div class="t" style="left:669px;top:731.15px;font-size:14px;line-height:14px;letter-spacing:0.5px;color:#111;">Phone No.</div>
<div class="b" style="left:752px;top:701px;width:125px;height:23px;background:#ECE9D8;border:1px solid #7F9DB9;"></div>
<div class="t" style="left:754.8px;top:706.15px;font-size:14px;line-height:14px;letter-spacing:0.67px;color:#B0ACA0;">Uttar Pradesh</div>
<div class="b" style="left:752px;top:725px;width:125px;height:24px;background:#fff;border:1px solid #7F9DB9;"></div>
<div class="b" style="left:883px;top:628px;width:82px;height:53px;border:1px solid #3A6290;border-radius:3px;background:linear-gradient(#FCFCFA,#F3F3EE 70%,#E4E2D8);box-shadow:inset 0 0 0 1px rgba(70,110,160,0.35), inset 0 -2px 0 #D8D4C4, 0 0 0 0.6px #8AA0C0;"></div>
<div class="t" style="left:908.3px;top:634.77px;font-size:13.5px;line-height:13.5px;letter-spacing:0.0px;color:#111;">Copy</div>
<div class="t" style="left:890.6px;top:649.37px;font-size:13.5px;line-height:13.5px;letter-spacing:0.22px;color:#111;">Temporary</div>
<div class="t" style="left:899.4px;top:663.77px;font-size:13.5px;line-height:13.5px;letter-spacing:-0.2px;color:#111;">Address</div>
<div class="b" style="left:886px;top:726px;width:63px;height:22px;border:1px solid #3A6290;border-radius:3px;background:linear-gradient(#FCFCFA,#F3F3EE 70%,#E4E2D8);box-shadow:inset 0 0 0 1px rgba(70,110,160,0.35), inset 0 -2px 0 #D8D4C4, 0 0 0 0.6px #8AA0C0;"></div>
<div class="t" style="left:908.3px;top:731.05px;font-size:14px;line-height:14px;letter-spacing:-1.3px;color:#111;">OK</div>
</body></html>
